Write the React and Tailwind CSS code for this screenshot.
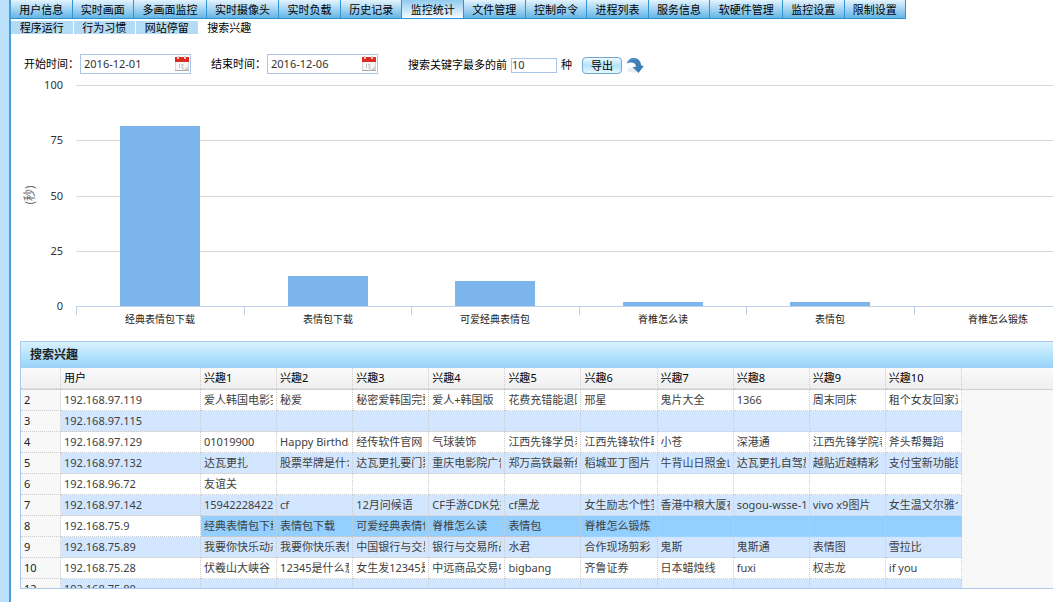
import React, { useState } from "react";

const TABS = [
  "用户信息", "实时画面", "多画面监控", "实时摄像头", "实时负载", "历史记录", "监控统计",
  "文件管理", "控制命令", "进程列表", "服务信息", "软硬件管理", "监控设置", "限制设置",
];

const SUB_TABS = ["程序运行", "行为习惯", "网站停留", "搜索兴趣"];

const CHART = [
  { label: "经典表情包下载", value: 81.5 },
  { label: "表情包下载", value: 13.5 },
  { label: "可爱经典表情包", value: 11.5 },
  { label: "脊椎怎么读", value: 2 },
  { label: "表情包", value: 2 },
  { label: "脊椎怎么锻炼", value: 0 },
];

const ROWS = [
  [2, "192.168.97.119", "爱人韩国电影完整", "秘爱", "秘密爱韩国完整版", "爱人+韩国版", "花费充错能退回吗", "邢星", "鬼片大全", "1366", "周末同床", "租个女友回家过年"],
  [3, "192.168.97.115"],
  [4, "192.168.97.129", "01019900", "Happy Birthday", "经传软件官网", "气球装饰", "江西先锋学员表", "江西先锋软件职业", "小苍", "深港通", "江西先锋学院表", "斧头帮舞蹈"],
  [5, "192.168.97.132", "达瓦更扎", "股票举牌是什么", "达瓦更扎要门票吗", "重庆电影院广告", "郑万高铁最新线路", "稻城亚丁图片", "牛背山日照金山", "达瓦更扎自驾旅游", "越贴近越精彩", "支付宝新功能圈子"],
  [6, "192.168.96.72", "友谊关"],
  [7, "192.168.97.142", "15942228422", "cf", "12月问候语", "CF手游CDK兑换", "cf黑龙", "女生励志个性签名", "香港中粮大厦在", "sogou-wsse-16", "vivo x9图片", "女生温文尔雅个性"],
  [8, "192.168.75.9", "经典表情包下载", "表情包下载", "可爱经典表情包", "脊椎怎么读", "表情包", "脊椎怎么锻炼"],
  [9, "192.168.75.89", "我要你快乐动态", "我要你快乐表情", "中国银行与交易所", "银行与交易所战略", "水君", "合作现场剪彩", "鬼斯", "鬼斯通", "表情图", "雪拉比"],
  [10, "192.168.75.28", "伏羲山大峡谷", "12345是什么意思", "女生发12345是", "中远商品交易中心", "bigbang", "齐鲁证券", "日本蜡烛线", "fuxi", "权志龙", "if you"],
  [12, "192.168.75.80"],
];

const INTERESTS = Array.from({ length: 10 }, (_, i) => i + 1);
const SELECTED_ROW = 8;

function CalendarIcon() {
  return (
    <svg width="14" height="16" viewBox="0 0 14 16" aria-hidden="true">
      <rect x="0.5" y="2.5" width="13" height="12" fill="#f6f6f6" stroke="#d6d6d6" />
      <rect x="0" y="1" width="14" height="5" fill="#dc2b22" />
      <rect x="2" y="0" width="2" height="3" fill="#f3c9c6" />
      <rect x="9" y="0" width="2" height="3" fill="#f3c9c6" />
      <path d="M4.5 8v4M6 8.5h2v2h-1v2h2" stroke="#c4c4c4" fill="none" />
      <path d="M0 14.500h14" stroke="#a9a9a9" />
      <path d="M9 14l4-4v4z" fill="#d0d0d0" />
    </svg>
  );
}

function RefreshIcon() {
  return (
    <svg width="18" height="17" viewBox="0 0 18 17" aria-hidden="true">
      <ellipse cx="7" cy="13" rx="6" ry="2.500" fill="#e6ecf1" />
      <path
        d="M0.500 6.500C2 2.500 5 0.500 8.500 1C12.500 1.500 15 4.500 15.200 8.500L17.800 9L12.500 16L6.500 10L10 9.700C9.800 7 8 5.600 5.500 5.600C3.500 5.600 2 5.800 0.500 6.500Z"
        fill="#3f7fb8"
      />
      <path d="M2 5C4 2.300 7 1.600 9.500 2.500" stroke="#5f9bcd" fill="none" />
    </svg>
  );
}

function DateField({ id, label, initial }) {
  const [value, setValue] = useState(initial);
  return (
    <div className="flex items-center gap-px">
      <label htmlFor={id}>{label}</label>
      <div className="flex h-5 w-[111px] items-center justify-between border border-[#a9c6ea] bg-white pl-[3px] pr-px">
        <input
          id={id}
          value={value}
          onChange={(e) => setValue(e.target.value)}
          className="w-20 min-w-0 text-[#333] outline-none"
        />
        <button type="button" aria-label="选择日期">
          <CalendarIcon />
        </button>
      </div>
    </div>
  );
}

function BarChart() {
  const left = 65;
  const step = 167.5;
  const base = 226;
  const scale = 2.21;
  const width = left + step * CHART.length;
  return (
    <div className="overflow-hidden">
      <svg width={width} height="256" className="max-w-none" role="img" aria-label="搜索兴趣统计">
        {[25, 50, 75, 100].map((v) => (
          <rect key={v} x={left} y={Math.round(base - v * scale)} width={width} height="1" fill="#d8d8d8" />
        ))}
        {[0, 25, 50, 75, 100].map((v) => (
          <text key={v} x="52" y={base - v * scale + 4} textAnchor="end" fontSize="11" fill="#333">
            {v}
          </text>
        ))}
        <text x="20" y="115" transform="rotate(-90 20 115)" textAnchor="middle" dominantBaseline="middle" fontSize="12" fill="#707070">
          (秒)
        </text>
        {CHART.map((d, i) => {
          const x = Math.round(left + i * step);
          return (
            <g key={d.label}>
              <rect x={x + 44} y={Math.round(base - d.value * scale)} width="80" height={Math.round(d.value * scale)} fill="#7cb5ec" />
              <rect x={x} y={base} width="1" height="9" fill="#c0d0e8" />
              <text x={x + 84} y="243" textAnchor="middle" fontSize="10" fill="#222">
                {d.label}
              </text>
            </g>
          );
        })}
        <rect x={left} y={base} width={width} height="1" fill="#c0d0e8" />
      </svg>
    </div>
  );
}

function Columns() {
  return (
    <colgroup>
      <col className="w-10" />
      <col className="w-[140px]" />
      {INTERESTS.map((n) => (
        <col key={n} />
      ))}
    </colgroup>
  );
}

const CELL = "h-[21px] border-b border-r border-dotted border-[#ccc] p-0 px-[3px] text-left font-normal";

function InterestGrid() {
  return (
    <section className="mt-[5px] ml-[9px] overflow-hidden border-y border-l border-[#a9c9ee]">
      <h2 className="h-[26px] bg-linear-to-b from-[#d9f1fd] via-[#aadffc] via-65% to-[#9bd0f6] pl-[9px] text-xs leading-[25px] font-bold text-[#222]">
        搜索兴趣
      </h2>
      <div className="border-b border-[#d0d0d0] bg-linear-to-b from-[#fafafa] to-[#efefef]">
        <table className="w-[941px] table-fixed border-separate border-spacing-0">
          <Columns />
          <thead>
            <tr>
              <th className={CELL} aria-label="序号" />
              <th className={CELL}>用户</th>
              {INTERESTS.map((n) => (
                <th key={n} className={CELL}>
                  兴趣{n}
                </th>
              ))}
            </tr>
          </thead>
        </table>
      </div>
      <div className="h-[198px] overflow-hidden bg-[#f8f8f8]">
        <table className="w-[941px] table-fixed border-separate border-spacing-0 text-[#404040]">
          <Columns />
          <tbody>
            {ROWS.map((row, r) => {
              const selected = row[0] === SELECTED_ROW;
              const stripe = r % 2 === 1 ? "bg-[#d2e7ff]" : "bg-white";
              return (
                <tr key={row[0]}>
                  <td className={`${CELL} bg-[#f8f8f8] text-[#222]`}>{row[0]}</td>
                  <td className={`${CELL} ${stripe}`}>{row[1]}</td>
                  {INTERESTS.map((n) => (
                    <td key={n} className={`${CELL} ${selected ? "bg-[#93cfff]" : stripe}`}>
                      <div className="overflow-hidden whitespace-nowrap">{row[n + 1]}</div>
                    </td>
                  ))}
                </tr>
              );
            })}
          </tbody>
        </table>
      </div>
    </section>
  );
}

export default function App() {
  const [tab, setTab] = useState("监控统计");
  const [sub, setSub] = useState("搜索兴趣");
  const [count, setCount] = useState("10");

  return (
    <div className="flex min-h-screen overflow-hidden bg-white font-['Noto_Sans','Noto_Sans_CJK_SC',sans-serif] text-[11px] leading-4 text-black">
      <div className="w-[11px] shrink-0 border-r-2 border-[#4a9fd6] bg-[#bae1f9]" />
      <main className="min-w-0 flex-1">
        <nav className="flex max-w-[895px]">
          {TABS.map((t) => (
            <button
              key={t}
              type="button"
              onClick={() => setTab(t)}
              className={`h-[19px] grow border-r border-b border-[#2f94d1] bg-linear-to-b px-2 pt-[2px] leading-4 whitespace-nowrap ${
                t === tab ? "from-[#8fccf0] to-[#f2faff]" : "from-[#e2f3fd] to-[#62b5e5]"
              }`}
            >
              {t}
            </button>
          ))}
        </nav>

        <div className="mt-[2px] flex max-w-[249px] gap-px">
          {SUB_TABS.map((t) => (
            <button
              key={t}
              type="button"
              onClick={() => setSub(t)}
              className={`h-[13px] grow px-2 leading-[13px] whitespace-nowrap ${t === sub ? "bg-white" : "bg-[#b3dbf6]"}`}
            >
              {t}
            </button>
          ))}
        </div>

        <form className="mt-[19px] flex h-[22px] items-center pl-[13px]" onSubmit={(e) => e.preventDefault()}>
          <DateField id="start" label="开始时间：" initial="2016-12-01" />
          <div className="ml-5">
            <DateField id="end" label="结束时间：" initial="2016-12-06" />
          </div>
          <div className="ml-[30px] flex items-center gap-1 pt-[2px]">
            <label htmlFor="count">搜索关键字最多的前</label>
            <input
              id="count"
              value={count}
              onChange={(e) => setCount(e.target.value)}
              className="h-[15px] w-[46px] border border-[#a9c6ea] text-[#333] outline-none"
            />
            <span>种</span>
            <button
              type="button"
              className="ml-[6px] h-[17px] w-10 rounded-[4px] border border-[#6fa9cf] bg-linear-to-b from-[#eefaff] via-[#b5e3fa] to-[#e4f8ff] leading-[15px]"
            >
              导出
            </button>
            <button type="button" aria-label="刷新">
              <RefreshIcon />
            </button>
          </div>
        </form>

        <div className="mt-[5px]">
          <BarChart />
        </div>
        <InterestGrid />
      </main>
    </div>
  );
}
